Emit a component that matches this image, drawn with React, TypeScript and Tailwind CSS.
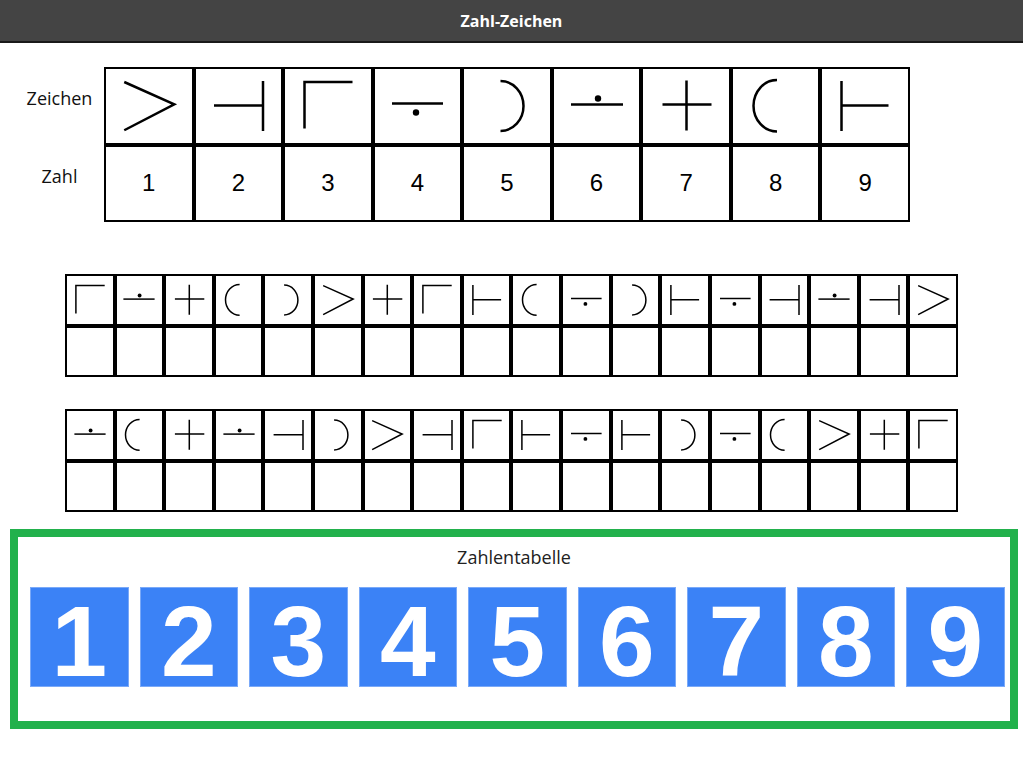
import React from 'react';

// Symbol drawings, coordinates relative to the cell centre (viewBox -30..30)
const SYMBOLS: Record<number, React.ReactNode> = {
  1: <polyline points="-24.75,-24 25.25,-1.75 -24.75,24.25" fill="none" />,
  2: <path d="M-24 -0.5 H25 M25 -25 V25" fill="none" />,
  3: <path d="M-23.5 22.5 V-24 H24.5" fill="none" />,
  4: (
    <>
      <path d="M-25 -2.5 H26" fill="none" />
      <circle cx="-1" cy="6.5" r="3.2" fill="currentColor" stroke="none" />
    </>
  ),
  5: <path d="M-6.5 -25 A23 25 0 0 1 -6.5 25" fill="none" />,
  6: (
    <>
      <path d="M-26 -1.5 H26" fill="none" />
      <circle cx="1" cy="-7.5" r="3.2" fill="currentColor" stroke="none" />
    </>
  ),
  7: <path d="M-23.5 -1.5 H25.5 M0.5 -25.5 V24.5" fill="none" />,
  8: <path d="M1 -26 A23.5 25.75 0 0 0 1 25.5" fill="none" />,
  9: <path d="M-23.5 -25 V25 M-23.5 -0.5 H23.5" fill="none" />,
};

const ROW_A = [3, 6, 7, 8, 5, 1, 7, 3, 9, 8, 4, 5, 9, 4, 2, 6, 2, 1];
const ROW_B = [6, 8, 7, 6, 2, 5, 1, 2, 3, 9, 4, 9, 5, 4, 8, 1, 7, 3];
const DIGITS = [1, 2, 3, 4, 5, 6, 7, 8, 9];

const Symbol = ({ n, size }: { n: number; size: number }) => (
  <svg
    width={size}
    height={size}
    viewBox="-30 -30 60 60"
    stroke="currentColor"
    strokeWidth={2.5}
    className="text-black"
  >
    {SYMBOLS[n]}
  </svg>
);

// Small practice table: symbols on top, empty boxes below
const PracticeTable = ({ symbols }: { symbols: number[] }) => (
  <div className="mx-auto w-[893px] grid grid-cols-[repeat(18,minmax(0,1fr))]">
    {symbols.map((s, i) => (
      <div
        key={`s-${i}`}
        className="h-[51.5px] border-2 border-black flex items-center justify-center"
      >
        <Symbol n={s} size={36} />
      </div>
    ))}
    {symbols.map((_, i) => (
      <div key={`e-${i}`} className="h-[51.5px] border-2 border-black" />
    ))}
  </div>
);

export default function App() {
  return (
    <div className="w-[1023px] min-h-[763px] bg-white font-['Open_Sans',sans-serif] text-[#111]">
      {/* HEADER */}
      <div className="h-[43px] bg-[#444444] border-b-2 border-[#1a1a1a] flex items-center justify-center">
        <span className="text-white text-[16px] font-bold leading-[24px]">Zahl-Zeichen</span>
      </div>

      {/* KEY TABLE */}
      <div className="mt-[24px] ml-[15px] flex">
        <div className="w-[89px] flex flex-col text-[18px] leading-[26px]">
          <div className="h-[77.5px] flex items-center justify-center pb-[16px]">Zeichen</div>
          <div className="h-[77.5px] flex items-center justify-center pb-[15px]">Zahl</div>
        </div>
        <div className="w-[806px] grid grid-cols-9">
          {DIGITS.map((d) => (
            <div
              key={`k-${d}`}
              className="h-[77.5px] border-2 border-black flex items-center justify-center"
            >
              <Symbol n={d} size={60} />
            </div>
          ))}
          {DIGITS.map((d) => (
            <div
              key={`n-${d}`}
              className="h-[77.5px] border-2 border-black flex items-center justify-center font-['Liberation_Sans',Arial,sans-serif] text-[24px] leading-[36px] text-black"
            >
              {d}
            </div>
          ))}
        </div>
      </div>

      {/* PRACTICE */}
      <div className="mt-[52px]">
        <PracticeTable symbols={ROW_A} />
      </div>
      <div className="mt-[32px]">
        <PracticeTable symbols={ROW_B} />
      </div>

      {/* NUMBER TABLE */}
      <div className="mt-[17px] ml-[10px] w-[1008px] h-[200px] border-[8px] border-[#22b14c] flex flex-col">
        <div className="mt-[8px] text-center text-[18px] leading-[24px] text-[#222]">Zahlentabelle</div>
        <div className="mt-[18px] pl-[12px] flex gap-[11px]">
          {DIGITS.map((d) => (
            <div
              key={`b-${d}`}
              className="w-[98.5px] h-[100px] bg-[#3b82f6] border border-[#7aa9f8] flex items-center justify-center"
            >
              <span className="mt-[7px] text-white font-bold text-[100px] leading-none font-['Liberation_Sans',Arial,sans-serif]">
                {d}
              </span>
            </div>
          ))}
        </div>
      </div>
    </div>
  );
}
